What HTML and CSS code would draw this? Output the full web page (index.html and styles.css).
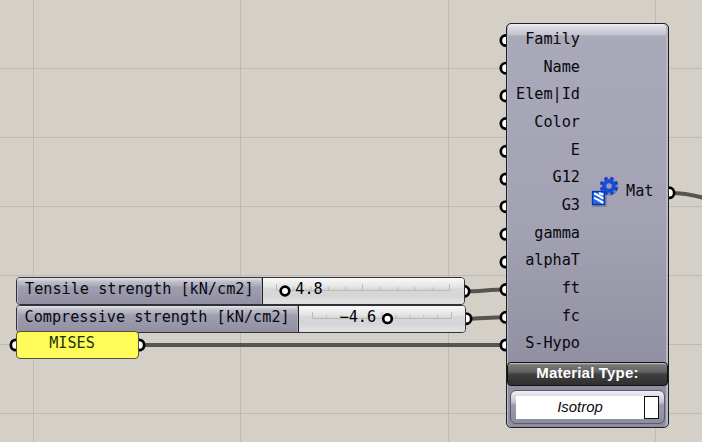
FILE: index.html
```html
<!DOCTYPE html>
<html lang="en">
<head>
<meta charset="utf-8">
<title>Material definition</title>
<link rel="stylesheet" href="styles.css">
</head>
<body>
<main class="canvas">
  <svg class="wires" width="702" height="442" viewBox="0 0 702 442">
    <g class="grid"><path d="M33.5 0V442M240.5 0V442M448.5 0V442M655.5 0V442M0 68.5H702M0 137.5H702M0 206.5H702M0 275.5H702M0 344.5H702M0 413.5H702"/></g>
    <g class="wire"><path d="M465 291.3C480 291.3 490 289.5 505 289.5M467 318.8C480 318.8 490 317.3 505 317.3M140 345H505M670 193C682 193 692 194.5 706 198.5"/></g>
    <g class="port">
      <circle cx="506" cy="40.5" r="5.2"/><circle cx="506" cy="68.2" r="5.2"/><circle cx="506" cy="95.9" r="5.2"/><circle cx="506" cy="123.6" r="5.2"/><circle cx="506" cy="151.3" r="5.2"/><circle cx="506" cy="179" r="5.2"/><circle cx="506" cy="206.7" r="5.2"/><circle cx="506" cy="234.3" r="5.2"/><circle cx="506" cy="262" r="5.2"/><circle cx="506" cy="289.6" r="5.2"/><circle cx="506" cy="317.3" r="5.2"/><circle cx="506" cy="345" r="5.2"/>
      <circle cx="669" cy="192.8" r="5.2"/><circle cx="464" cy="291.3" r="5.2"/><circle cx="466" cy="318.7" r="5.2"/><circle cx="16" cy="345" r="5.2"/><circle cx="139" cy="345" r="5.2"/>
    </g>
  </svg>

  <section class="slider tensile">
    <div class="slider-name">Tensile strength [kN/cm2]</div>
    <div class="slider-track">
      <svg width="201" height="26" viewBox="263 278 201 26">
        <path class="ticks" d="M276.5 284V290.5H449.5V284M293.8 287V290M311.1 287V290M328.4 287V290M345.7 287V290M362.5 284V290M380.3 287V290M397.6 287V290M414.9 287V290M432.2 287V290"/>
        <circle class="knob" cx="285" cy="291" r="4.3"/>
        <text x="295.3" y="294">4.8</text>
      </svg>
    </div>
  </section>

  <section class="slider compressive">
    <div class="slider-name">Compressive strength [kN/cm2]</div>
    <div class="slider-track">
      <svg width="166" height="26" viewBox="299 306 166 26">
        <path class="ticks" d="M312.5 312V318.5H451.5V312M326.4 315V318M340.3 315V318M354.2 315V318M368.1 315V318M382 312V318M395.9 315V318M409.8 315V318M423.7 315V318M437.6 315V318"/>
        <circle class="knob" cx="387.5" cy="318.7" r="4.3"/>
        <text x="339.5" y="322">−4.6</text>
      </svg>
    </div>
  </section>

  <section class="panel">MISES</section>

  <section class="component">
    <div class="params">
      <div class="inputs">
        <span>Family</span><span>Name</span><span>Elem|Id</span><span>Color</span><span>E</span><span>G12</span><span>G3</span><span>gamma</span><span>alphaT</span><span>ft</span><span>fc</span><span>S-Hypo</span>
      </div>
      <svg class="icon" width="32" height="34" viewBox="588 174 32 34">
        <g class="icon-shadow" transform="translate(.8 1)"><circle cx="609" cy="186" r="8.4"/><rect x="591.5" y="190" width="14.5" height="16"/></g>
        <g transform="translate(609 186) rotate(10)">
          <circle class="gear-teeth" r="7.6" pathLength="80"/>
          <circle class="gear-ring" r="4.8"/>
        </g>
        <rect class="sheet" x="592.5" y="191.5" width="12" height="13"/>
        <path class="hatch" d="M594 193.5C597 194 600 197 603.3 198.5M594 198C597 198.5 600 201.5 603.3 203M599 193L603.3 194.8"/>
      </svg>
      <div class="output">Mat</div>
    </div>
    <div class="menu-title">Material Type:</div>
    <div class="menu-frame">
      <div class="menu"><span>Isotrop</span><i class="menu-button"></i></div>
    </div>
  </section>
</main>
</body>
</html>
```

FILE: styles.css
```css
* { box-sizing: border-box; }
body { margin: 0; overflow: hidden; }
.canvas {
  position: relative;
  width: 702px;
  height: 442px;
  background: #d4d0c8;
  font: 15.2px/20px "DejaVu Sans Mono", monospace;
  color: #08080d;
}
.wires { display: block; }
.grid path { fill: none; stroke: #bfbbb4; }
.wire path { fill: none; stroke: #58544f; stroke-width: 4; }
.port circle, .knob { fill: #fff; stroke: #000; stroke-width: 2.7; }

.slider {
  position: absolute;
  left: 16px;
  display: flex;
  height: 28px;
  border: 1px solid #303036;
  border-radius: 4px;
  overflow: hidden;
  background: #ddd;
}
.tensile { top: 277px; width: 449px; }
.compressive { top: 305px; width: 450px; }
.slider-name {
  flex: none;
  width: 246px;
  padding: 1px 0 0 8px;
  white-space: pre;
  border-right: 1px solid #202024;
  background: linear-gradient(#e4e4ea 0, #bcbcca 4px, #b1b0c1 7px, #a09fb2 9px, #918fa1 100%);
  box-shadow: inset 1px 0 #b9b9c8, inset -1px 0 #a9a9b8;
}
.compressive .slider-name { width: 282px; padding-left: 7.5px; }
.slider-track {
  flex: 1;
  background: linear-gradient(#fafafa 0, #ededed 5px, #e4e4e4 9px, #d7d7d7 11px, #d6d6d6 18px, #e2e2e2 25px, #d8d8d8 100%);
}
.slider-track svg { display: block; }
.ticks { fill: none; stroke: #bbb; }
.panel {
  position: absolute;
  left: 16px;
  top: 331px;
  width: 123px;
  height: 28px;
  padding: 1px 11px 0 0;
  border: 1px solid #57543c;
  border-radius: 4px;
  background: #fffc5a;
  color: #1c3205;
  text-align: center;
}
.component {
  position: absolute;
  left: 506px;
  top: 23px;
  width: 163px;
  height: 405px;
  border: 1px solid #1d1d22;
  border-radius: 5px;
  background: linear-gradient(#efeff4 0, #dbdbe2 3px, #c3c3cf 11px, #a9a9b9 12px, #a3a2b2 50%, #9190a2 85%, #8f8ea0 100%);
  box-shadow: inset 1px 0 #b7b7c5, inset -2px 0 #b7b7c5;
}
.params { display: flex; height: 338px; padding-top: 2px; }
.inputs { width: 73px; text-align: right; }
.inputs span { display: block; height: 27.66px; line-height: 27.66px; }
.icon { margin: 148px 0 0 8px; }
.output { margin: 155px 0 0 6px; }
.menu-title {
  height: 24px;
  border: 1px solid #101010;
  border-radius: 4px;
  background: linear-gradient(#aaa 0, #777 2px, #626262 9px, #404040 11px, #303030 22px);
  box-shadow: inset 0 1px #bbb;
  color: #fff;
  text-align: center;
  font: bold 15px/19px "Liberation Sans", sans-serif;
  letter-spacing: .18px;
}
.menu-frame {
  height: 34px;
  margin: 4px 3px 0;
  padding: 5px;
  border: 1px solid #5b5a67;
  border-radius: 6px;
  background: linear-gradient(#efeff5 0, #c6c6d1 11px, #9c9bad 14px, #8e8da0 100%);
}
.menu {
  display: flex;
  height: 23px;
  background: #fff;
  font: italic 14.9px/22px "Liberation Sans", sans-serif;
}
.menu span { flex: 1; text-align: center; }
.menu-button { width: 15px; border: 1px solid #111; }
.icon-shadow { fill: #55556b; opacity: .4; }
.gear-teeth { fill: none; stroke: #143fc8; stroke-width: 3.4; stroke-dasharray: 5.4 4.6; }
.gear-ring { fill: #9c9ca8; stroke: #164be0; stroke-width: 4; }
.sheet { fill: #2368e8; stroke: #0836b4; stroke-width: 1.3; }
.hatch { fill: none; stroke: #fff; stroke-width: 2.1; }
```
